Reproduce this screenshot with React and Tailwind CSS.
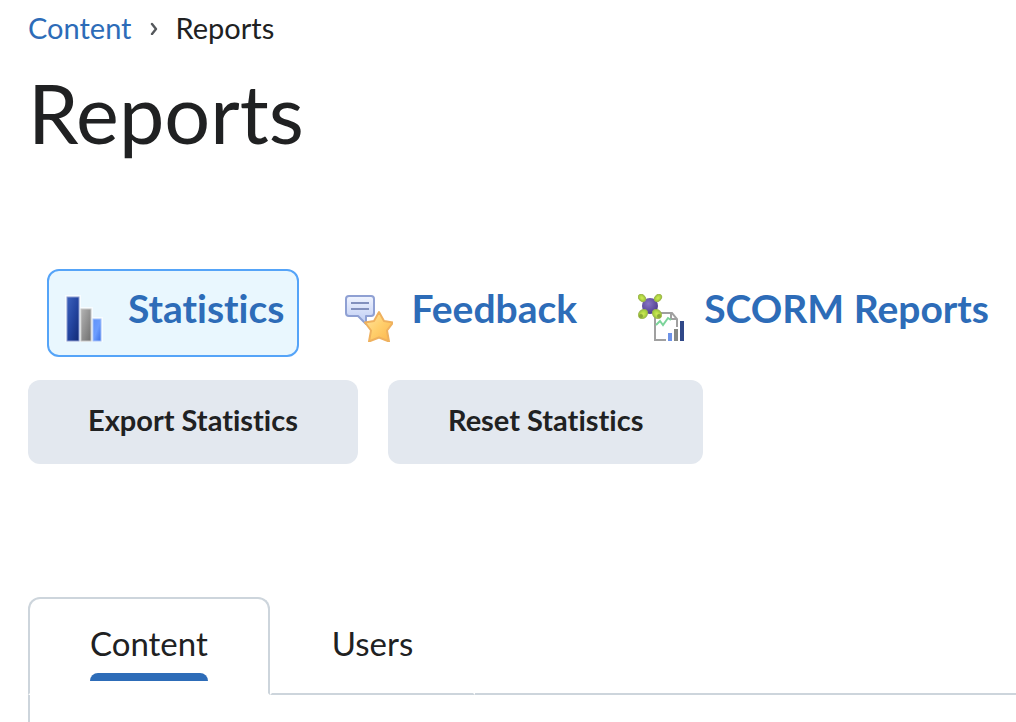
import React, { useState } from "react";

const StatisticsIcon = () => (
  <svg width="48" height="48" viewBox="0 0 48 48" aria-hidden="true" className="shrink-0">
    <defs>
      <linearGradient id="barNavy" x1="0" y1="0" x2="1" y2="1">
        <stop offset="0" stopColor="#3d62bd" />
        <stop offset="0.5" stopColor="#2445a0" />
        <stop offset="1" stopColor="#122a75" />
      </linearGradient>
      <linearGradient id="barGray" x1="0" y1="0" x2="1" y2="1">
        <stop offset="0" stopColor="#b4b4b4" />
        <stop offset="1" stopColor="#6f6f6f" />
      </linearGradient>
      <linearGradient id="barBlue" x1="0" y1="0" x2="1" y2="1">
        <stop offset="0" stopColor="#5f92fa" />
        <stop offset="0.5" stopColor="#6c9dff" />
        <stop offset="1" stopColor="#3b70e6" />
      </linearGradient>
    </defs>
    <path d="M3 1h16v12h12v10h10v25H3z" fill="#fff" opacity="0.65" />
    <rect x="5" y="3" width="12" height="44" fill="url(#barNavy)" stroke="#8b9bd0" strokeWidth="1" />
    <rect x="19" y="15" width="10" height="32" fill="url(#barGray)" stroke="#c3c3c3" strokeWidth="1" />
    <rect x="31" y="25" width="8" height="22" fill="url(#barBlue)" stroke="#a3bff8" strokeWidth="1" />
  </svg>
);

const FeedbackIcon = () => (
  <svg width="48" height="48" viewBox="0 0 48 48" aria-hidden="true" className="shrink-0">
    <defs>
      <linearGradient id="bubbleFill" x1="0" y1="0" x2="0" y2="1">
        <stop offset="0" stopColor="#f0f4ff" />
        <stop offset="1" stopColor="#bccbf3" />
      </linearGradient>
      <linearGradient id="starFill" x1="0" y1="0" x2="1" y2="1">
        <stop offset="0" stopColor="#ffe6a3" />
        <stop offset="0.5" stopColor="#ffcf6c" />
        <stop offset="1" stopColor="#fcb44a" />
      </linearGradient>
    </defs>
    <path
      d="M4 2h22q3 0 3 3v14q0 3-3 3h-5v8l-8-8H4q-3 0-3-3V5q0-3 3-3z"
      fill="url(#bubbleFill)"
      stroke="#8fa0d3"
      strokeWidth="2"
      strokeLinejoin="round"
    />
    <path d="M6 9h18M6 15h18" stroke="#8290bd" strokeWidth="2" />
    <path
      d="M34 18l5 9 9 1.500-6 8 2 11-10-4-10 4 2-11-6-8 9-1.500z"
      fill="url(#starFill)"
      stroke="#efb15e"
      strokeWidth="2"
      strokeLinejoin="round"
    />
  </svg>
);

const ScormIcon = () => (
  <svg width="48" height="48" viewBox="0 0 48 48" aria-hidden="true" className="shrink-0">
    <defs>
      <radialGradient id="coreFill" cx="0.4" cy="0.35" r="0.7">
        <stop offset="0" stopColor="#8674c4" />
        <stop offset="1" stopColor="#4d3b8c" />
      </radialGradient>
      <radialGradient id="nodeFill">
        <stop offset="0" stopColor="#d2ea58" />
        <stop offset="1" stopColor="#9ccb38" />
      </radialGradient>
    </defs>
    <path d="M28 46H17V19h17l5 6v8" fill="#fff" stroke="#a0a0a0" strokeWidth="2" />
    <path d="M33 19v6h6" fill="none" stroke="#a0a0a0" strokeWidth="2" />
    <path d="M18 31l4-4 3 4 5-7 3 2" fill="none" stroke="#7bd49a" strokeWidth="2" />
    <rect x="30" y="39" width="4" height="8" fill="#6d93e8" />
    <rect x="36" y="35" width="4" height="12" fill="#868984" />
    <rect x="42" y="27" width="4" height="20" fill="#304888" />
    <circle cx="12" cy="12" r="8" fill="url(#coreFill)" />
    <g fill="url(#nodeFill)" stroke="#9db54a" strokeWidth="1">
      <ellipse cx="4" cy="4" rx="4" ry="3" transform="rotate(45 4 4)" />
      <ellipse cx="20" cy="4" rx="4" ry="3" transform="rotate(-45 20 4)" />
      <ellipse cx="5" cy="20" rx="5" ry="4" transform="rotate(-45 5 20)" />
      <ellipse cx="19" cy="20" rx="5" ry="4" transform="rotate(45 19 20)" />
    </g>
    <circle cx="3" cy="22" r="2" fill="#8aa838" />
    <circle cx="21" cy="22" r="2" fill="#8aa838" />
  </svg>
);

const reports = [
  { name: "Statistics", icon: StatisticsIcon },
  { name: "Feedback", icon: FeedbackIcon },
  { name: "SCORM Reports", icon: ScormIcon },
];

const tabs = ["Content", "Users"];

const App = () => {
  const [activeReport, setActiveReport] = useState("Statistics");
  const [activeTab, setActiveTab] = useState("Content");

  return (
    <main className="min-h-screen overflow-x-hidden bg-white pl-7 pt-3 font-['Lato',sans-serif] text-[#202122] [font-variant-ligatures:none]">
      <nav aria-label="Breadcrumb" className="flex items-center text-[29px] leading-8">
        <a href="#content" className="text-[#2d6cb8]">Content</a>
        <svg width="8" height="14" viewBox="0 0 8 14" aria-hidden="true" className="mx-[18px]">
          <path
            d="M2 3l4 5-4 5"
            fill="none"
            stroke="#55585c"
            strokeWidth="2.400"
            strokeLinecap="round"
            strokeLinejoin="round"
          />
        </svg>
        <span>Reports</span>
      </nav>

      <h1 className="mt-[21px] text-[81px] leading-[96px]">Reports</h1>

      <nav aria-label="Report types" className="mt-27 flex gap-[31px] pl-[19px]">
        {reports.map(({ name, icon: Icon }) => (
          <a
            key={name}
            href={`#${name.toLowerCase().replace(" ", "-")}`}
            onClick={() => setActiveReport(name)}
            aria-current={activeReport === name ? "page" : undefined}
            className={`flex h-22 shrink-0 gap-[18px] whitespace-nowrap rounded-xl border-2 px-[13px] text-[39px] font-bold leading-12 text-[#2d6cb8] ${
              activeReport === name ? "border-[#55a4f8] bg-[#e9f7fe]" : "border-transparent"
            }`}
          >
            <span className="pt-[23px]">
              <Icon />
            </span>
            <span className="pt-[13px]">{name}</span>
          </a>
        ))}
      </nav>

      <div className="mt-[23px] flex gap-[30px]">
        <button className="rounded-xl bg-[#e3e8ef] px-15 pb-7 pt-6 text-[29px] font-bold leading-8">
          Export Statistics
        </button>
        <button className="rounded-xl bg-[#e3e8ef] px-15 pb-7 pt-6 text-[29px] font-bold leading-8">
          Reset Statistics
        </button>
      </div>

      <div role="tablist" className="mt-[133px] flex">
        {tabs.map((tab) => (
          <button
            key={tab}
            role="tab"
            id={`tab-${tab}`}
            aria-selected={activeTab === tab}
            onClick={() => setActiveTab(tab)}
            className={`border-2 px-15 pb-3 pt-6 text-[33px] leading-10 ${
              activeTab === tab
                ? "rounded-t-xl border-[#cdd5dc] border-b-transparent"
                : "border-transparent border-b-[#cdd5dc]"
            }`}
          >
            {tab}
            <span
              className={`mt-[10px] block h-2 rounded-t-lg ${activeTab === tab ? "bg-[#2d6cb8]" : ""}`}
            />
          </button>
        ))}
        <div className="flex-1 border-b-2 border-[#cdd5dc]" />
      </div>
      <div
        role="tabpanel"
        aria-labelledby={`tab-${activeTab}`}
        className="h-7 border-l-2 border-[#cdd5dc]"
      />
    </main>
  );
};

export default App;
